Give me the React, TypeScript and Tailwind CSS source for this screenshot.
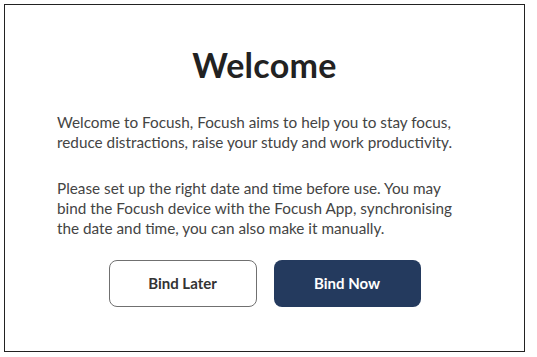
export default function App() {
  return (
    <div className="w-[537px] h-[357px] bg-white p-1 font-['Lato','Noto_Sans',sans-serif]">
      <div className="w-[521px] h-[348px] border-[1.5px] border-[#222] bg-white flex flex-col items-center">
        <h1 className="mt-[36px] text-[34px] leading-[48px] font-bold text-[#222] tracking-[0.3px]">Welcome</h1>
        <div className="mt-[23px] w-[417px] pl-[1px] text-[15.3px] leading-[20px] text-[#444]">
          <p>
            Welcome to Focush, Focush aims to help you to stay focus,
            <br />
            reduce distractions, raise your study and work productivity.
          </p>
          <p className="mt-[26px]">
            Please set up the right date and time before use. You may
            <br />
            bind the Focush device with the Focush App, synchronising
            <br />
            the date and time, you can also make it manually.
          </p>
        </div>
        <div className="mt-[22px] flex gap-[17px]">
          <button className="w-[148px] h-[47px] rounded-[8px] border-[1.5px] border-[#707070] bg-white text-[15px] font-bold text-[#333]">
            Bind Later
          </button>
          <button className="w-[147px] h-[47px] rounded-[8px] bg-[#243a5e] text-[15px] font-bold text-white">
            Bind Now
          </button>
        </div>
      </div>
    </div>
  );
}
